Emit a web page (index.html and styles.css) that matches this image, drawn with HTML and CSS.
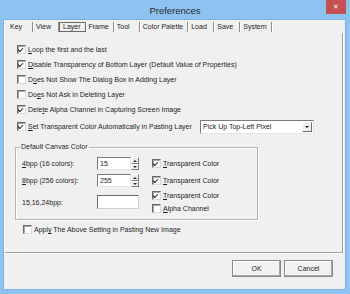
FILE: index.html
```html
<!DOCTYPE html>
<html lang="en">
<head>
    <meta charset="UTF-8">
    <title>Preferences</title>
    <link rel="stylesheet" href="styles.css">
</head>
<body>
    <div class="window">
        <div class="titlebar">
            <span class="title">Preferences</span>
            <span class="close">&#x2715;</span>
        </div>
        <div class="client">
            <div class="panel">
                <div class="tabs">
                    <span class="tab">Key</span>
                    <span class="tab">View</span>
                    <span class="tab active">Layer</span>
                    <span class="tab">Frame</span>
                    <span class="tab">Tool</span>
                    <span class="tab">Color Palette</span>
                    <span class="tab">Load</span>
                    <span class="tab">Save</span>
                    <span class="tab">System</span>
                </div>
                <div class="page">
                    <div class="check on"><span class="box"></span><span><u>L</u>oop the first and the last</span></div>
                    <div class="check on"><span class="box"></span><span><u>D</u>isable Transparency of Bottom Layer (Default Value of Properties)</span></div>
                    <div class="check"><span class="box"></span><span>D<u>o</u>es Not Show The Dialog Box in Adding Layer</span></div>
                    <div class="check"><span class="box"></span><span>Do<u>e</u>s Not Ask in Deleting Layer</span></div>
                    <div class="check on"><span class="box"></span><span>Dele<u>t</u>e Alpha Channel in Capturing Screen Image</span></div>
                    <div class="combo-row">
                        <div class="check on"><span class="box"></span><span><u>S</u>et Transparent Color Automatically in Pasting Layer</span></div>
                        <div class="combo">
                            <span class="combo-text">Pick Up Top-Left Pixel</span>
                            <span class="drop"></span>
                        </div>
                    </div>

                    <fieldset class="group">
                        <legend>Default Canvas Color</legend>
                        <div class="grid">
                            <span class="lbl"><u>4</u>bpp (16 colors):</span>
                            <div class="spin-edit">
                                <span class="edit">15</span>
                                <span class="spin"><span class="up"></span><span class="down"></span></span>
                            </div>
                            <div class="check on"><span class="box"></span><span><u>T</u>ransparent Color</span></div>

                            <span class="lbl"><u>8</u>bpp (256 colors):</span>
                            <div class="spin-edit">
                                <span class="edit">255</span>
                                <span class="spin"><span class="up"></span><span class="down"></span></span>
                            </div>
                            <div class="check on"><span class="box"></span><span><u>T</u>ransparent Color</span></div>

                            <span class="lbl">15,16,24bpp:</span>
                            <span class="swatch"></span>
                            <div class="stack">
                                <div class="check on"><span class="box"></span><span><u>T</u>ransparent Color</span></div>
                                <div class="check"><span class="box"></span><span><u>A</u>lpha Channel</span></div>
                            </div>
                        </div>
                    </fieldset>

                    <div class="check apply"><span class="box"></span><span>Appl<u>y</u> The Above Setting in Pasting New Image</span></div>
                </div>
            </div>
            <div class="buttons">
                <button class="btn">OK</button>
                <button class="btn">Cancel</button>
            </div>
        </div>
    </div>
</body>
</html>
```

FILE: styles.css
```css
body {
    margin: 0;
    font-family: "Liberation Sans", Arial, sans-serif;
    font-size: 7px;
    color: #1e1e1e;
}
.window {
    width: 350px;
    height: 294px;
    background-color: #8cc3f1;
    display: flex;
    flex-direction: column;
}
.titlebar {
    height: 20px;
    flex: none;
    display: flex;
    align-items: center;
    justify-content: center;
    position: relative;
    font-size: 9.5px;
    color: #2a2a2a;
}
.close {
    position: absolute;
    right: 4px;
    top: 0;
    width: 20px;
    height: 14px;
    background-color: #c75050;
    color: #fff;
    font-size: 7px;
    display: flex;
    align-items: center;
    justify-content: center;
}
.client {
    flex: 1;
    margin: 0 5px 5px 4px;
    background-color: #f0f0f0;
    display: flex;
    flex-direction: column;
    box-shadow: 0 0 0 1px #7fb1e0;
}
.panel {
    width: 339px;
    height: 233px;
    flex: none;
    display: flex;
    flex-direction: column;
    box-sizing: border-box;
    border-left: 1px solid #fff;
}

/* tab strip */
.tabs {
    height: 13px;
    flex: none;
    display: flex;
    align-items: flex-start;
    padding: 2px 0 0 2px;
    box-sizing: border-box;
}
.tab {
    height: 10px;
    line-height: 10px;
    min-width: 26px;
    padding: 0 4px 0 3px;
    box-sizing: border-box;
    border-right: 1px solid #8e8e8e;
    box-shadow: 1px 0 0 #fff;
    white-space: nowrap;
}
.tab.active {
    border: 1px solid #6a6a6a;
    line-height: 8px;
    padding-left: 3px;
}

.page {
    flex: 1;
    border-right: 1px solid #a0a0a0;
    border-bottom: 1px solid #a0a0a0;
    box-shadow: 1px 1px 0 #fff;
    padding: 9px 0 0 12px;
}

/* check boxes */
.check {
    display: flex;
    align-items: center;
    gap: 2px;
    height: 15px;
    white-space: nowrap;
}
.box {
    width: 9px;
    height: 9px;
    flex: none;
    box-sizing: border-box;
    background-color: #fff;
    border: 1px solid;
    border-color: #6a6a6a #d8d8d8 #d8d8d8 #6a6a6a;
    box-shadow: inset 1px 1px 0 #a8a8a8;
    position: relative;
}
.check.on .box::after {
    content: "";
    position: absolute;
    left: 1px;
    top: 0.5px;
    width: 4px;
    height: 2px;
    border-left: 1.5px solid #111;
    border-bottom: 1.5px solid #111;
    transform: rotate(-45deg);
    transform-origin: 3px 3px;
}
u {
    text-decoration-thickness: 1px;
    text-underline-offset: 1px;
}

.combo-row {
    display: flex;
    align-items: center;
    justify-content: space-between;
    width: 297px;
    height: 15px;
    margin-top: 2px;
}
.combo {
    width: 114px;
    height: 14px;
    box-sizing: border-box;
    background-color: #fff;
    border: 1px solid;
    border-color: #7a7a7a #e3e3e3 #e3e3e3 #7a7a7a;
    display: flex;
    align-items: center;
    justify-content: space-between;
    padding: 0 1px 0 2px;
}
.drop {
    width: 10px;
    height: 10px;
    box-sizing: border-box;
    background-color: #f0f0f0;
    border: 1px solid;
    border-color: #fff #6d6d6d #6d6d6d #fff;
    position: relative;
}
.drop::after {
    content: "";
    position: absolute;
    left: 2px;
    top: 3px;
    border-left: 2px solid transparent;
    border-right: 2px solid transparent;
    border-top: 2px solid #111;
}

/* group box */
.group {
    width: 243px;
    box-sizing: border-box;
    margin: 9px 0 0 -2px;
    padding: 4px 0 4px 6px;
    border: 1px solid #b4b4b4;
    box-shadow: 1px 1px 0 #fff, inset 1px 1px 0 #fff;
}
.group legend {
    padding: 0 1px;
    margin-left: -2px;
    line-height: 8px;
}
.grid {
    display: grid;
    grid-template-columns: 75px 55px auto;
    grid-template-rows: 17px 17px 26px;
    align-items: center;
}
.spin-edit {
    display: flex;
    width: 42px;
    height: 13px;
}
.edit {
    width: 34px;
    box-sizing: border-box;
    background-color: #fff;
    border: 1px solid;
    border-color: #7a7a7a #e3e3e3 #e3e3e3 #7a7a7a;
    padding-left: 2px;
    line-height: 11px;
}
.spin {
    width: 8px;
    display: flex;
    flex-direction: column;
}
.spin span {
    flex: 1;
    box-sizing: border-box;
    border: 1px solid;
    border-color: #fff #7d7d7d #7d7d7d #fff;
    background-color: #ececec;
    position: relative;
}
.spin .up::after, .spin .down::after {
    content: "";
    position: absolute;
    left: 1px;
    top: 1.5px;
    border-left: 2px solid transparent;
    border-right: 2px solid transparent;
}
.spin .up::after {
    border-bottom: 2px solid #333;
}
.spin .down::after {
    border-top: 2px solid #333;
}
.swatch {
    width: 42px;
    height: 14px;
    box-sizing: border-box;
    background-color: #fff;
    border: 1px solid;
    border-color: #6a6a6a #d0d0d0 #d0d0d0 #6a6a6a;
}
.stack .check {
    height: 13px;
}

.apply {
    margin: 2px 0 0 6px;
}

/* dialog buttons */
.buttons {
    display: flex;
    justify-content: flex-end;
    gap: 3px;
    padding: 7px 12px 0 0;
}
.btn {
    width: 49px;
    height: 17px;
    padding: 0;
    font-family: inherit;
    font-size: 7px;
    color: #1e1e1e;
    background-color: #f2f2f2;
    border: 1px solid #8a8a8a;
    box-shadow: inset -1px -1px 0 #a8a8a8, inset 1px 1px 0 #fff;
}
```
